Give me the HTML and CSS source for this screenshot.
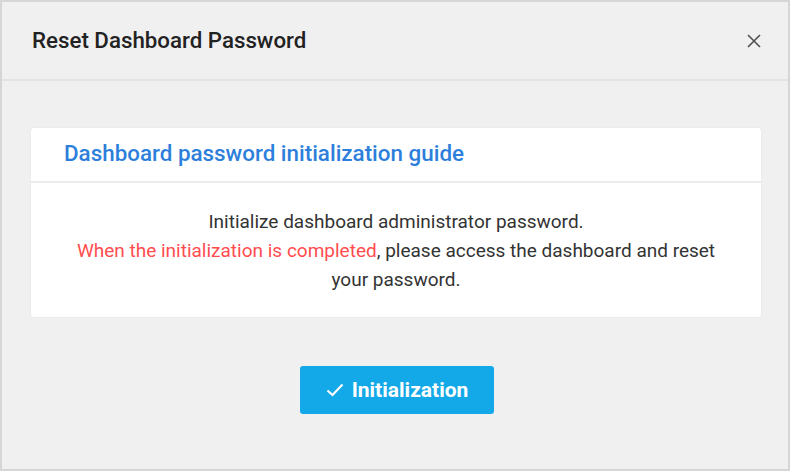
FILE: index.html
```html
<!DOCTYPE html>
<html>
<head>
<meta charset="utf-8">
<link rel="stylesheet" href="styles.css">
</head>
<body>
<div class="frame">
  <div class="header">
    <div class="title">Reset Dashboard Password</div>
    <button class="close" aria-label="Close">
      <svg width="16" height="16" viewBox="0 0 16 16"><path d="M2 2L14 14M14 2L2 14" stroke="#505050" stroke-width="1.6" fill="none"/></svg>
    </button>
  </div>
  <div class="content">
    <div class="card">
      <div class="card-head">Dashboard password initialization guide</div>
      <div class="card-body">
        <p>Initialize dashboard administrator password.<br><span class="warn">When the initialization is completed</span>, please access the dashboard and reset your password.</p>
      </div>
    </div>
    <div class="actions">
      <button class="btn">
        <svg width="18" height="14" viewBox="0 0 18 14"><path d="M1.5 7.5L6.5 12L16.5 1.5" stroke="#fff" stroke-width="2.2" fill="none"/></svg>
        <span>Initialization</span>
      </button>
    </div>
  </div>
</div>
</body>
</html>
```

FILE: styles.css
```css
* { box-sizing: border-box; }
html, body { margin: 0; padding: 0; }
body { font-family: Roboto, "Noto Sans", sans-serif; }
.frame {
  width: 790px;
  height: 471px;
  border: 2px solid #d6d6d6;
  background: #f0f0f0;
  display: flex;
  flex-direction: column;
}
.header {
  height: 79px;
  border-bottom: 2px solid #e3e3e3;
  display: flex;
  align-items: center;
  justify-content: space-between;
  padding: 0 26px 0 30px;
}
.title {
  font-size: 22.3px;
  font-weight: 500;
  color: #222;
  padding-bottom: 2px;
}
.close {
  border: 0;
  background: none;
  padding: 0;
  width: 16px;
  height: 16px;
  display: flex;
}
.content {
  padding: 47px 27px 0 29px;
}
.card {
  background: #fff;
  border-radius: 3px;
  box-shadow: 0 0 2px rgba(0,0,0,0.08);
}
.card-head {
  height: 55px;
  border-bottom: 2px solid #ececec;
  padding: 0 33px;
  display: flex;
  align-items: center;
  font-size: 22.4px;
  font-weight: 500;
  color: #2d7fdb;
  padding-bottom: 3px;
}
.card-body {
  padding: 24px 30px 23px;
}
.card-body p {
  margin: 0;
  text-align: center;
  font-size: 19px;
  line-height: 29px;
  color: #333;
}
.warn { color: #ff4d4f; }
.actions {
  display: flex;
  justify-content: center;
  padding-top: 49px;
  padding-left: 2px;
}
.btn {
  width: 194px;
  height: 48px;
  border: 0;
  border-radius: 3px;
  background: #13a9e8;
  color: #fff;
  font-family: Roboto, "Noto Sans", sans-serif;
  font-size: 21px;
  font-weight: 700;
  display: flex;
  align-items: center;
  justify-content: center;
  gap: 8px;
}
```
